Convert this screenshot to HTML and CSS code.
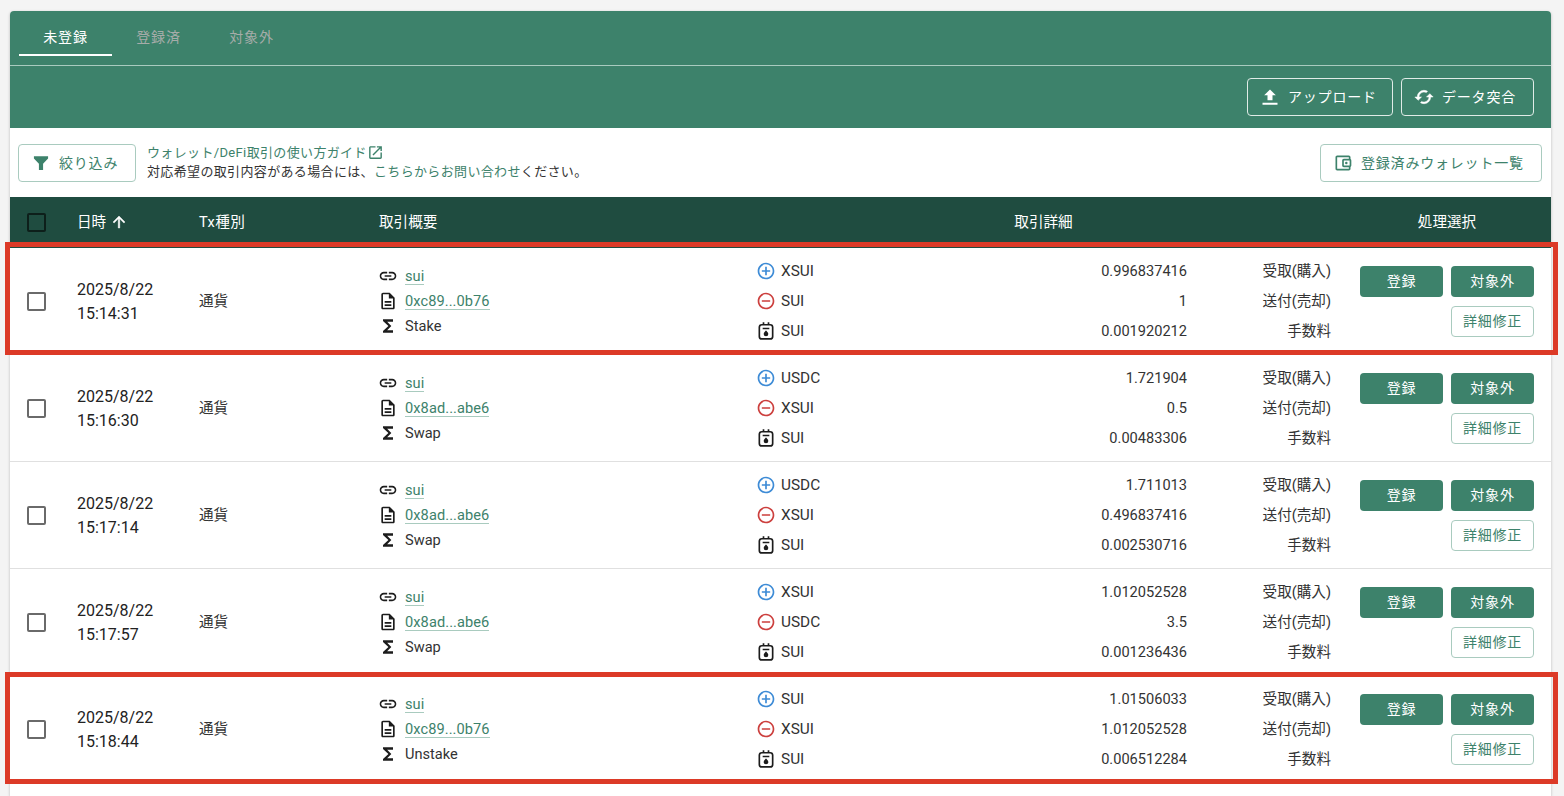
FILE: index.html
```
<!DOCTYPE html>
<html lang="ja">
<head>
  <meta charset="UTF-8" />
  <title>ウォレット/DeFi取引</title>
  <link rel="stylesheet" href="styles.css">
</head>
<body>
  <svg class="sprite">
    <symbol id="i-upload" viewBox="0 0 24 24"><path d="M9 16h6v-6h4l-7-7-7 7h4zm-6 3h18v2.300H3z"/></symbol>
    <symbol id="i-sync" viewBox="0 0 24 24"><path stroke="currentColor" stroke-width="0.600" d="M19 8l-4 4h3c0 3.310-2.690 6-6 6-1.010 0-1.970-.25-2.800-.7l-1.460 1.460C8.970 19.540 10.430 20 12 20c4.420 0 8-3.580 8-8h3l-4-4zM6 12c0-3.310 2.690-6 6-6 1.010 0 1.970.25 2.800.7l1.460-1.460C15.030 4.460 13.570 4 12 4c-4.420 0-8 3.580-8 8H1l4 4 4-4H6z"/></symbol>
    <symbol id="i-filter" viewBox="0 0 24 24"><path d="M3.500 4h17v2.500l-6 6.500v7.500h-5V13l-6-6.500z"/></symbol>
    <symbol id="i-open" viewBox="0 0 24 24"><path d="M19 19H5V5h7V3H5c-1.110 0-2 .9-2 2v14c0 1.100.89 2 2 2h14c1.100 0 2-.9 2-2v-7h-2v7zM14 3v2h3.590l-9.830 9.830 1.410 1.410L19 6.410V10h2V3h-7z"/></symbol>
    <symbol id="i-wallet" viewBox="0 0 24 24"><path d="M21 7.280V5c0-1.100-.9-2-2-2H5c-1.110 0-2 .9-2 2v14c0 1.100.89 2 2 2h14c1.100 0 2-.9 2-2v-2.280c.59-.35 1-.98 1-1.720V9c0-.74-.41-1.370-1-1.720zM20 9v6h-7V9h7zM5 19V5h14v2h-6c-1.100 0-2 .9-2 2v6c0 1.100.9 2 2 2h6v2H5z"/><circle cx="16" cy="12" r="1.500"/></symbol>
    <symbol id="i-up" viewBox="0 0 24 24"><path stroke="currentColor" stroke-width="0.600" d="M4 12l1.410 1.410L11 7.830V20h2V7.830l5.580 5.590L20 12l-8-8-8 8z"/></symbol>
    <symbol id="i-link" viewBox="0 0 24 24"><path d="M3.900 12c0-1.710 1.390-3.100 3.100-3.100h4V7H7c-2.760 0-5 2.240-5 5s2.240 5 5 5h4v-1.900H7c-1.710 0-3.100-1.390-3.100-3.100zM8 13h8v-2H8v2zm9-6h-4v1.900h4c1.710 0 3.100 1.390 3.100 3.100s-1.390 3.100-3.100 3.100h-4V17h4c2.760 0 5-2.240 5-5s-2.240-5-5-5z"/></symbol>
    <symbol id="i-doc" viewBox="0 0 24 24"><path d="M8 16h8v2H8zm0-4h8v2H8zm6-10H6c-1.100 0-2 .9-2 2v16c0 1.100.89 2 1.990 2H18c1.100 0 2-.9 2-2V8l-6-6zm4 18H6V4h7v5h5v11z"/></symbol>
    <symbol id="i-sigma" viewBox="0 0 24 24"><path d="M18 4H6v2l6.500 6L6 18v2h12v-3h-7l5-5-5-5h7z"/></symbol>
    <symbol id="i-plus" viewBox="0 0 24 24"><path d="M13 7h-2v4H7v2h4v4h2v-4h4v-2h-4V7zm-1-5C6.480 2 2 6.480 2 12s4.480 10 10 10 10-4.480 10-10S17.520 2 12 2zm0 18c-4.410 0-8-3.590-8-8s3.590-8 8-8 8 3.590 8 8-3.590 8-8 8z"/></symbol>
    <symbol id="i-minus" viewBox="0 0 24 24"><path d="M7 11v2h10v-2H7zm5-9C6.480 2 2 6.480 2 12s4.480 10 10 10 10-4.480 10-10S17.520 2 12 2zm0 18c-4.410 0-8-3.590-8-8s3.590-8 8-8 8 3.590 8 8-3.590 8-8 8z"/></symbol>
    <symbol id="i-gas" viewBox="0 0 24 24"><g fill="none" stroke="currentColor" stroke-width="2"><rect x="4" y="4.500" width="16" height="17" rx="3"/><path d="M9 1.500v3M15 1.500v3M8 9h8"/></g><path d="M12 11.500s2.800 2.300 2.800 4.100a2.800 2.800 0 0 1-5.600 0c0-1.800 2.800-4.100 2.800-4.100z"/></symbol>
  </svg>

  <div class="card">
    <nav class="tabs">
      <a class="tab active">未登録</a>
      <a class="tab">登録済</a>
      <a class="tab">対象外</a>
    </nav>
    <div class="toolbar">
      <button class="btn upload"><svg class="icon"><use href="#i-upload"/></svg>アップロード</button>
      <button class="btn sync"><svg class="icon"><use href="#i-sync"/></svg>データ突合</button>
    </div>
    <div class="filters">
      <button class="btn filter"><svg class="icon"><use href="#i-filter"/></svg>絞り込み</button>
      <div class="guide">
        <p><a>ウォレット/DeFi取引の使い方ガイド<svg class="icon"><use href="#i-open"/></svg></a></p>
        <p>対応希望の取引内容がある場合には、<a>こちらからお問い合わせ</a>ください。</p>
      </div>
      <button class="btn wallets"><svg class="icon"><use href="#i-wallet"/></svg>登録済みウォレット一覧</button>
    </div>

    <div class="row head">
      <span class="check"></span>
      <span class="label sort">日時<svg class="icon"><use href="#i-up"/></svg></span>
      <span class="label tx">Tx種別</span>
      <span class="label">取引概要</span>
      <span class="label detail-label">取引詳細</span>
      <span class="label action-label">処理選択</span>
    </div>

    <div class="row marked">
      <span class="check"></span>
      <div class="date">2025/8/22<br>15:14:31</div>
      <div class="type">通貨</div>
      <ul class="summary">
        <li><svg class="icon"><use href="#i-link"/></svg><a>sui</a></li>
        <li><svg class="icon"><use href="#i-doc"/></svg><a>0xc89...0b76</a></li>
        <li><svg class="icon"><use href="#i-sigma"/></svg>Stake</li>
      </ul>
      <ul class="detail">
        <li><svg class="icon plus"><use href="#i-plus"/></svg><span>XSUI</span><span>0.996837416</span><span>受取(購入)</span></li>
        <li><svg class="icon minus"><use href="#i-minus"/></svg><span>SUI</span><span>1</span><span>送付(売却)</span></li>
        <li><svg class="icon"><use href="#i-gas"/></svg><span>SUI</span><span>0.001920212</span><span>手数料</span></li>
      </ul>
      <div class="actions">
        <button>登録</button><button>対象外</button><button class="edit">詳細修正</button>
      </div>
    </div>

    <div class="row">
      <span class="check"></span>
      <div class="date">2025/8/22<br>15:16:30</div>
      <div class="type">通貨</div>
      <ul class="summary">
        <li><svg class="icon"><use href="#i-link"/></svg><a>sui</a></li>
        <li><svg class="icon"><use href="#i-doc"/></svg><a>0x8ad...abe6</a></li>
        <li><svg class="icon"><use href="#i-sigma"/></svg>Swap</li>
      </ul>
      <ul class="detail">
        <li><svg class="icon plus"><use href="#i-plus"/></svg><span>USDC</span><span>1.721904</span><span>受取(購入)</span></li>
        <li><svg class="icon minus"><use href="#i-minus"/></svg><span>XSUI</span><span>0.5</span><span>送付(売却)</span></li>
        <li><svg class="icon"><use href="#i-gas"/></svg><span>SUI</span><span>0.00483306</span><span>手数料</span></li>
      </ul>
      <div class="actions">
        <button>登録</button><button>対象外</button><button class="edit">詳細修正</button>
      </div>
    </div>

    <div class="row">
      <span class="check"></span>
      <div class="date">2025/8/22<br>15:17:14</div>
      <div class="type">通貨</div>
      <ul class="summary">
        <li><svg class="icon"><use href="#i-link"/></svg><a>sui</a></li>
        <li><svg class="icon"><use href="#i-doc"/></svg><a>0x8ad...abe6</a></li>
        <li><svg class="icon"><use href="#i-sigma"/></svg>Swap</li>
      </ul>
      <ul class="detail">
        <li><svg class="icon plus"><use href="#i-plus"/></svg><span>USDC</span><span>1.711013</span><span>受取(購入)</span></li>
        <li><svg class="icon minus"><use href="#i-minus"/></svg><span>XSUI</span><span>0.496837416</span><span>送付(売却)</span></li>
        <li><svg class="icon"><use href="#i-gas"/></svg><span>SUI</span><span>0.002530716</span><span>手数料</span></li>
      </ul>
      <div class="actions">
        <button>登録</button><button>対象外</button><button class="edit">詳細修正</button>
      </div>
    </div>

    <div class="row">
      <span class="check"></span>
      <div class="date">2025/8/22<br>15:17:57</div>
      <div class="type">通貨</div>
      <ul class="summary">
        <li><svg class="icon"><use href="#i-link"/></svg><a>sui</a></li>
        <li><svg class="icon"><use href="#i-doc"/></svg><a>0x8ad...abe6</a></li>
        <li><svg class="icon"><use href="#i-sigma"/></svg>Swap</li>
      </ul>
      <ul class="detail">
        <li><svg class="icon plus"><use href="#i-plus"/></svg><span>XSUI</span><span>1.012052528</span><span>受取(購入)</span></li>
        <li><svg class="icon minus"><use href="#i-minus"/></svg><span>USDC</span><span>3.5</span><span>送付(売却)</span></li>
        <li><svg class="icon"><use href="#i-gas"/></svg><span>SUI</span><span>0.001236436</span><span>手数料</span></li>
      </ul>
      <div class="actions">
        <button>登録</button><button>対象外</button><button class="edit">詳細修正</button>
      </div>
    </div>

    <div class="row marked last">
      <span class="check"></span>
      <div class="date">2025/8/22<br>15:18:44</div>
      <div class="type">通貨</div>
      <ul class="summary">
        <li><svg class="icon"><use href="#i-link"/></svg><a>sui</a></li>
        <li><svg class="icon"><use href="#i-doc"/></svg><a>0xc89...0b76</a></li>
        <li><svg class="icon"><use href="#i-sigma"/></svg>Unstake</li>
      </ul>
      <ul class="detail">
        <li><svg class="icon plus"><use href="#i-plus"/></svg><span>SUI</span><span>1.01506033</span><span>受取(購入)</span></li>
        <li><svg class="icon minus"><use href="#i-minus"/></svg><span>XSUI</span><span>1.012052528</span><span>送付(売却)</span></li>
        <li><svg class="icon"><use href="#i-gas"/></svg><span>SUI</span><span>0.006512284</span><span>手数料</span></li>
      </ul>
      <div class="actions">
        <button>登録</button><button>対象外</button><button class="edit">詳細修正</button>
      </div>
    </div>
  </div>
</body>
</html>
```
FILE: styles.css
```
* {
  box-sizing: border-box;
}
body {
  margin: 0;
  height: 796px;
  padding: 11px 13px 0 10px;
  overflow: hidden;
  background: #f4f4f4;
  color: #333;
  font-family: Roboto, "Noto Sans CJK JP", sans-serif;
  font-size: 14.6px;
}
p, ul {
  margin: 0;
  padding: 0;
  list-style: none;
}
a {
  color: #3d826b;
}
button {
  padding: 0;
  font: inherit;
}
.sprite {
  display: none;
}
.icon {
  width: 20px;
  height: 20px;
  flex: none;
  fill: currentColor;
}
.card {
  height: 785px;
  background: #fff;
  border-radius: 4px 4px 0 0;
  box-shadow: 0 1px 3px rgba(0, 0, 0, 0.25);
}
.tabs {
  display: flex;
  height: 55px;
  padding: 8px 9px 0;
  background: #3d826b;
  border-bottom: 1px solid #a9cbbf;
  border-radius: 4px 4px 0 0;
}
.tab {
  width: 93px;
  height: 37px;
  line-height: 37px;
  text-align: center;
  font-size: 14px;
  letter-spacing: 0.8px;
  color: #a6aca9;
}
.tab.active {
  color: #fff;
  border-bottom: 2px solid #fff;
}
.toolbar {
  display: flex;
  justify-content: flex-end;
  gap: 8px;
  height: 62px;
  padding: 12px 17px 0;
  background: #3d826b;
}
.btn {
  display: flex;
  align-items: center;
  height: 38px;
  padding: 0 0 3px 12px;
  background: none;
  border: 1px solid #a9cbbf;
  border-radius: 4px;
  color: #3d826b;
  font-size: 14px;
  letter-spacing: 0.8px;
}
.btn .icon {
  width: 20px;
  height: 20px;
  margin: 2px 8px 0 0;
}
.toolbar .btn {
  color: #fff;
  border-color: #e0ebe7;
}
.upload {
  width: 146px;
}
.sync {
  width: 133px;
}
.filter {
  width: 118px;
}
.wallets {
  width: 222px;
  margin-left: auto;
}
.filters {
  display: flex;
  height: 69px;
  padding: 16px 9px 0 8px;
}
.guide {
  margin: -1px 0 0 11px;
  font-size: 13px;
  letter-spacing: 0.35px;
  line-height: 19px;
}
.guide .icon {
  width: 17px;
  height: 17px;
  vertical-align: -4px;
}
.row {
  position: relative;
  display: grid;
  grid-template-columns: 67px 122px 180px 378px 593px 201px;
  align-items: center;
  height: 107px;
  border-bottom: 1px solid #e0e0e0;
}
.row.head {
  height: 51px;
  background: #1f4c40;
  border: 0;
  color: #fff;
}
.check {
  width: 19px;
  height: 19px;
  margin-left: 17px;
  border: 2px solid #6a6a6a;
  border-radius: 2px;
}
.head .check {
  border-color: #0d1f1a;
}
.label {
  padding-bottom: 5px;
}
.sort {
  display: flex;
  align-items: center;
}
.sort .icon {
  width: 18px;
  height: 18px;
  margin: 4px 0 0 4px;
}
.tx {
  letter-spacing: 0.4px;
}
.detail-label {
  padding-right: 20px;
  text-align: center;
}
.action-label {
  padding-right: 7px;
  text-align: center;
}
.date {
  padding-top: 2px;
  font-size: 16px;
  line-height: 24px;
  color: #222;
}
.type {
  padding-bottom: 4px;
}
.summary li {
  display: flex;
  align-items: center;
  height: 24.6px;
}
.summary .icon {
  margin-right: 6px;
}
.summary a {
  line-height: 16px;
  letter-spacing: 0.08px;
  border-bottom: 1px solid #a9cbbf;
}
.summary .icon, .detail .icon {
  color: #1c1c1c;
}
.summary .icon {
  margin-left: -1px;
  margin-right: 7px;
}
.detail li {
  display: grid;
  grid-template-columns: 25px 80px 326px 144px;
  align-items: center;
  height: 29.7px;
  margin-left: -1px;
}
.detail span:nth-of-type(1) {
  font-size: 15.4px;
}
.detail span:nth-of-type(n+2) {
  text-align: right;
}
.detail span:nth-of-type(3) {
  padding-bottom: 3px;
}
.detail .plus {
  color: #3d8bd6;
}
.detail .minus {
  color: #cc3f3d;
}
.actions {
  display: flex;
  flex-wrap: wrap;
  justify-content: flex-end;
  gap: 9px 8px;
  padding-right: 17px;
}
.actions button {
  width: 83px;
  height: 31px;
  padding-bottom: 2px;
  background: #3d826b;
  border: 0;
  border-radius: 4px;
  color: #fff;
  font-size: 14px;
  letter-spacing: 0.8px;
}
.actions .edit {
  background: #fff;
  border: 1px solid #a9cbbf;
  color: #3d826b;
}
/* red frame around staking rows */
.marked::after {
  content: "";
  position: absolute;
  inset: -6px -7px -1px -5px;
  border: 5px solid #dc3a27;
  z-index: 1;
}
.marked.last::after {
  inset: -4px -7px -2px -5px;
}
```
